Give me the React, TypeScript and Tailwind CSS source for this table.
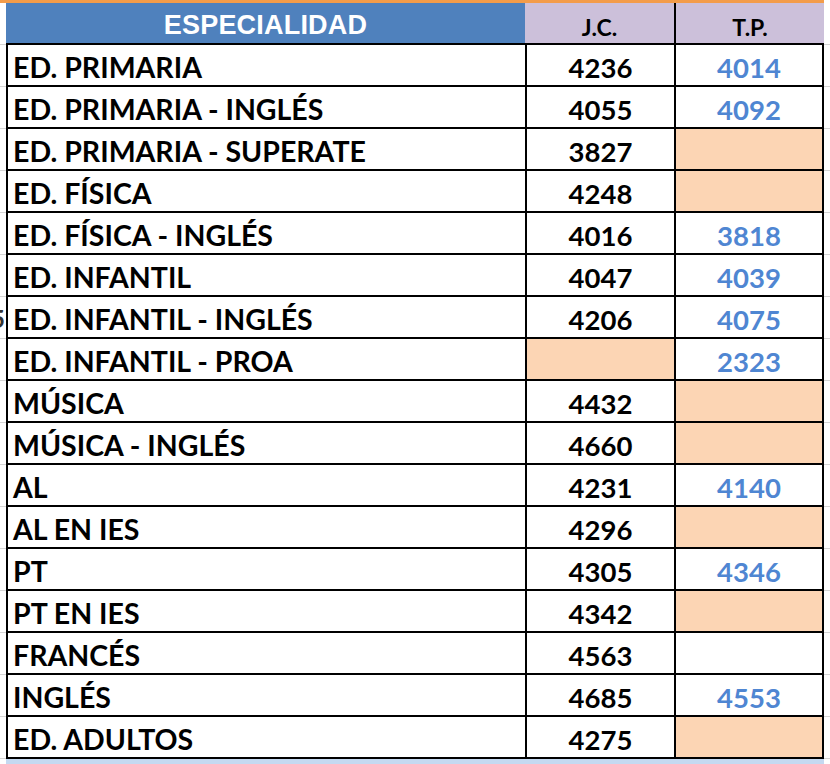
import React from "react";

type Row = { name: string; jc: string; tp: string; jcPeach?: boolean; tpPeach?: boolean };

const rows: Row[] = [
  { name: "ED. PRIMARIA", jc: "4236", tp: "4014" },
  { name: "ED. PRIMARIA - INGLÉS", jc: "4055", tp: "4092" },
  { name: "ED. PRIMARIA - SUPERATE", jc: "3827", tp: "", tpPeach: true },
  { name: "ED. FÍSICA", jc: "4248", tp: "", tpPeach: true },
  { name: "ED. FÍSICA - INGLÉS", jc: "4016", tp: "3818" },
  { name: "ED. INFANTIL", jc: "4047", tp: "4039" },
  { name: "ED. INFANTIL - INGLÉS", jc: "4206", tp: "4075" },
  { name: "ED. INFANTIL - PROA", jc: "", tp: "2323", jcPeach: true },
  { name: "MÚSICA", jc: "4432", tp: "", tpPeach: true },
  { name: "MÚSICA - INGLÉS", jc: "4660", tp: "", tpPeach: true },
  { name: "AL", jc: "4231", tp: "4140" },
  { name: "AL EN IES", jc: "4296", tp: "", tpPeach: true },
  { name: "PT", jc: "4305", tp: "4346" },
  { name: "PT EN IES", jc: "4342", tp: "", tpPeach: true },
  { name: "FRANCÉS", jc: "4563", tp: "" },
  { name: "INGLÉS", jc: "4685", tp: "4553" },
  { name: "ED. ADULTOS", jc: "4275", tp: "", tpPeach: true },
];

const labelFont = "font-['Lato',sans-serif] font-bold text-[28.5px] leading-none";
const numFont = "font-['Lato',sans-serif] font-bold text-[27.5px] leading-none";

export default function App() {
  return (
    <div className="w-[830px] h-[764px] bg-white overflow-hidden">
      <div className="h-[3px] w-[824px] bg-[#f39c4a]" />
      <div className="flex">
        <div className="w-[6px] flex flex-col">
          <div className="h-[42px] border-b border-[#d4d4d4]" />
          {rows.map((r, i) => (
            <div key={i} className="h-[42px] border-b border-[#d4d4d4] relative overflow-hidden">
              {i === 6 && (
                <span className="absolute left-[-9px] top-[10px] font-['Lato',sans-serif] font-bold text-[24px] leading-none text-[#333]">5</span>
              )}
            </div>
          ))}
        </div>
        <div className="w-[818px] flex flex-col">
          <div className="flex h-[42px] border-b-2 border-black">
            <div className="w-[519px] bg-[#4f81bd] flex items-center justify-center pt-[4px]">
              <span className="font-['Liberation_Sans',sans-serif] font-bold text-[27px] leading-none text-white tracking-[0.2px]">ESPECIALIDAD</span>
            </div>
            <div className="w-[149px] bg-[#ccc0da] flex items-end justify-center pb-[4px]">
              <span className="font-['Lato',sans-serif] font-bold text-[23px] leading-none text-black">J.C.</span>
            </div>
            <div className="w-[150px] bg-[#ccc0da] border-l-2 border-black flex items-end justify-center pb-[4px]">
              <span className="font-['Lato',sans-serif] font-bold text-[23px] leading-none text-black">T.P.</span>
            </div>
          </div>
          {rows.map((r, i) => (
            <div key={i} className="flex h-[42px] border-b-2 border-l-2 border-r-2 border-black">
              <div className="w-[517px] flex items-end pl-[5px] pb-[4px]">
                <span className={`${labelFont} text-black`}>{r.name}</span>
              </div>
              <div className={`w-[149px] border-l-2 border-black flex items-end justify-center pb-[4px] ${r.jcPeach ? "bg-[#fcd5b4]" : ""}`}>
                <span className={`${numFont} text-black`}>{r.jc}</span>
              </div>
              <div className={`w-[148px] border-l-2 border-black flex items-end justify-center pb-[4px] ${r.tpPeach ? "bg-[#fcd5b4]" : ""}`}>
                <span className={`${numFont} text-[#4f86d2]`}>{r.tp}</span>
              </div>
            </div>
          ))}
          <div className="h-[6px] bg-[#c5d9f1]" />
        </div>
        <div className="w-[6px] flex flex-col">
          <div className="h-[42px] border-b border-[#d4d4d4]" />
          {rows.map((_, i) => (
            <div key={i} className="h-[42px] border-b border-[#d4d4d4]" />
          ))}
        </div>
      </div>
    </div>
  );
}
